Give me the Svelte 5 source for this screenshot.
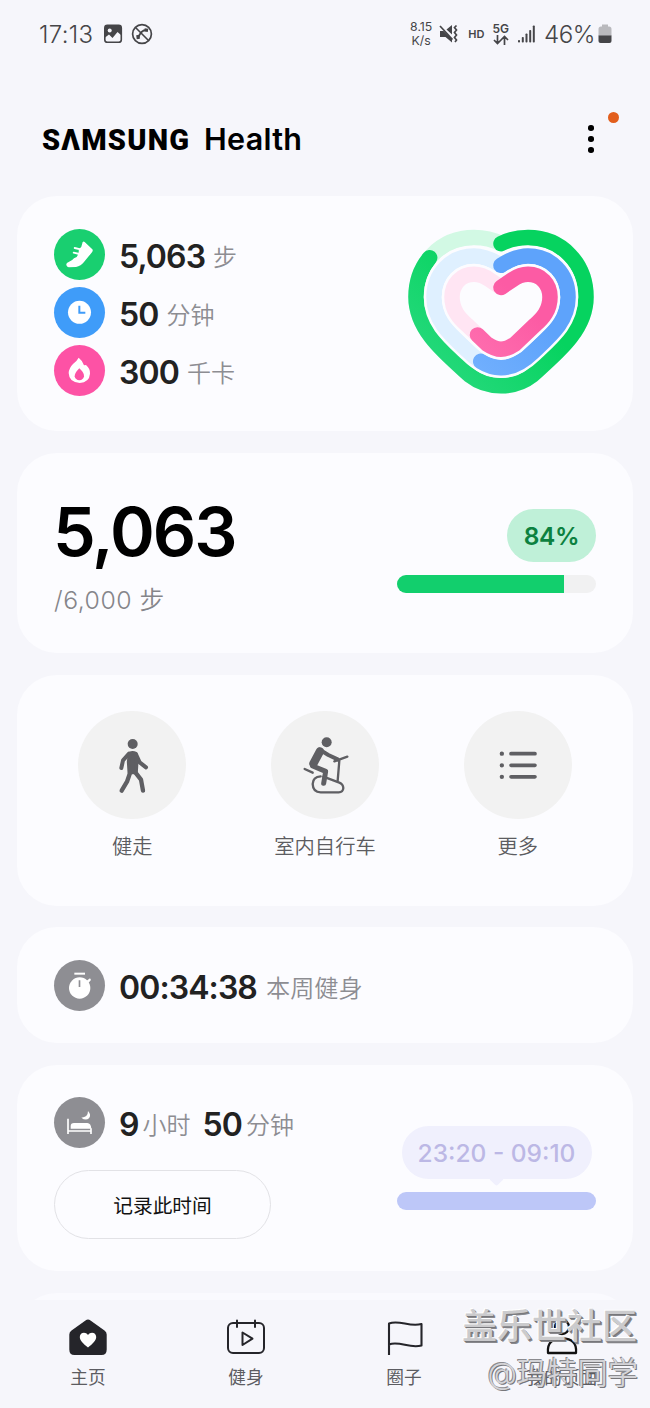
<script>
  const rings = [
    {
      name: "steps",
      track: "#d2f9e4",
      from: "#26d97c",
      to: "#06d35f",
      value: 84.5,
      d: "M501 243.7Q513 237.6 528 237.6C561 237.6 586 263 586 297C586 330 557 353 532 375.5Q519 385.8 501 385.8Q483 385.8 470 375.5C445 353 416 330 416 297C416 263 441 237.6 474 237.6Q489 237.6 501 243.7"
    },
    {
      name: "time",
      track: "#dff0ff",
      from: "#78b4ff",
      to: "#5ea3fb",
      value: 55.5,
      d: "M501 265.3Q516 256 528 256C551 256 568 274 568 297.3C568 321 551 335 533 352Q517 367.7 501 367.7Q485 367.7 469 352C451 335 434 321 434 297.3C434 274 451 256 474 256Q486 256 501 265.3"
    },
    {
      name: "energy",
      track: "#ffe5f3",
      from: "#ff79b5",
      to: "#fc5ba4",
      value: 60,
      d: "M501 287.5L512 280Q520 274.3 528 274.3C541 274.3 550 284 550 297C550 310 543 318 535 325L515 344Q507 349.3 501 349.3Q495 349.3 487 344L467 325C459 318 452 310 452 297C452 284 461 274.3 474 274.3Q482 274.3 490 280L501 287.5"
    }
  ];

  const goal = { steps: "5,063", target: "6,000", percent: 84 };
</script>

<div class="screen">
  <div class="status">
    <span class="clock">17:13</span>
    <svg class="s-image" width="20" height="20" viewBox="0 0 20 20">
      <rect x="1.8" y="1.3" width="16.5" height="17" rx="2.6" fill="none" stroke="#454548" stroke-width="1.6" />
      <path d="M2 2H18V11L14.5 8 9.5 14 6 10.5 2 13.5Z" fill="#454548" />
      <circle cx="6.7" cy="6.4" r="2" fill="#f6f6fb" />
    </svg>
    <svg class="s-call" width="22" height="22" viewBox="0 0 22 22" fill="none" stroke="#454548">
      <circle cx="11" cy="11" r="9.4" stroke-width="1.7" />
      <path d="M4.5 4.5 17.5 17.5" stroke-width="1.6" />
      <path d="M17 7Q10 6 7 15.5" stroke-width="1.8" />
      <path d="M13.5 6.8L17 7.3M6.8 12L7.3 16" stroke-width="3.2" />
    </svg>
    <span class="grow"></span>
    <span class="speed">8.15<br />K/s</span>
    <svg class="s-mute" width="20" height="20" viewBox="0 0 20 20">
      <path d="M1 7H4.5L13 15V18.5L6.5 13H1Z M7.5 5.5L13 1V10.5Z" fill="#454548" />
      <path d="M1 2L13.5 15.5" stroke="#454548" stroke-width="1.7" />
      <path d="M17.5 1.5l-2 2 2 2.5-2 2.5 2 2.5-2 2.5 2 2.5-1.5 2" fill="none" stroke="#454548" stroke-width="1.7" />
    </svg>
    <span class="hd">HD</span>
    <span class="net">
      5G
      <svg width="16" height="10" viewBox="0 0 16 10" fill="none" stroke="#454548" stroke-width="1.7">
        <path d="M4.5 0V8M1 5L4.5 8.5 8 5M11.5 10V2M8 5L11.5 1.5 15 5" />
      </svg>
    </span>
    <svg class="s-signal" width="19" height="18" viewBox="0 0 19 18" fill="#454548">
      <rect x="1" y="15" width="2" height="2.5" rx=".8" />
      <rect x="4.8" y="12" width="2" height="5.5" rx=".8" />
      <rect x="8.5" y="8.5" width="2" height="9" rx=".8" />
      <rect x="12.2" y="5" width="2" height="12.5" rx=".8" />
      <rect x="15.8" y="0.5" width="2" height="17" rx=".8" />
    </svg>
    <span class="power">46%</span>
    <svg class="s-battery" width="14" height="20" viewBox="0 0 14 20">
      <path d="M4 0.5H10V2.5H11Q13.5 2.5 13.5 5V12H.5V5Q.5 2.5 3 2.5H4Z" fill="#b9b9bd" />
      <path d="M.5 11.5H13.5V17Q13.5 19 11.5 19H2.5Q.5 19 .5 17Z" fill="#454548" />
    </svg>
  </div>

  <header>
    <h1><span class="brand" aria-label="SAMSUNG">SΛMSUNG</span><span class="product">Health</span></h1>
    <div class="menu">
      <i></i><i></i><i></i>
      <b class="badge"></b>
    </div>
  </header>

  <main>
    <section class="card summary">
      <div class="stats">
        <div class="stat">
          <svg class="disc green" viewBox="0 0 153 153" fill="#fff">
            <path d="M37 108Q36 102 44 99Q55 95 60 88L68 84Q76 72 74 62L82 53 86 39Q89 36 92 39L115 61Q118 65 114 70L104 82L90 99Q81 111 66 114L44 115Q38 114 37 108Z" />
            <path d="M62 57L80 61M59 71L76 75" stroke="#fff" stroke-width="5.5" stroke-linecap="round" />
          </svg>
          <strong>5,063</strong><span>步</span>
        </div>
        <div class="stat">
          <svg class="disc blue" viewBox="0 0 153 153">
            <circle cx="76.5" cy="76" r="34.5" fill="#fff" />
            <path d="M76 56V77H94" fill="none" stroke="#3f9cf9" stroke-width="6" />
          </svg>
          <strong>50</strong><span>分钟</span>
        </div>
        <div class="stat">
          <svg class="disc pink" viewBox="0 0 153 153">
            <path d="M74 38Q84 45 90 61L96 60Q109 71 108 86Q106 112 77 114Q45 112 44 84Q45 69 57 57Q68 49 74 38Z" fill="#fff" />
            <path d="M76 70Q91 84 90 94Q88 105 76 106Q64 105 62 94Q62 84 76 70Z" fill="#fd52a5" />
          </svg>
          <strong>300</strong><span>千卡</span>
        </div>
      </div>

      <svg class="heart" width="190" height="168" viewBox="406 228 190 168" fill="none">
        <defs>
          {#each rings as ring}
            <linearGradient id={ring.name} gradientUnits="userSpaceOnUse" x1="440" y1="380" x2="520" y2="300">
              <stop offset="0" stop-color={ring.from} />
              <stop offset="1" stop-color={ring.to} />
            </linearGradient>
          {/each}
        </defs>
        {#each rings as ring, i}
          {#if i > 0}
            <path d={ring.d} stroke="#fcfcff" stroke-width="20.5" />
          {/if}
          <path d={ring.d} stroke={ring.track} stroke-width="15.5" />
          <path
            d={ring.d}
            pathLength="100"
            stroke="url(#{ring.name})"
            stroke-width="15.5"
            stroke-linecap="round"
            stroke-dasharray="{ring.value} 200"
          />
        {/each}
      </svg>
    </section>

    <section class="card goal">
      <div>
        <div class="count">{goal.steps}</div>
        <div class="target">/{goal.target} 步</div>
      </div>
      <div class="progress">
        <span class="percent">{goal.percent}%</span>
        <div class="bar"><div class="fill" style="width: {goal.percent}%"></div></div>
      </div>
    </section>

    <section class="card workouts">
      <div class="workout">
        <svg viewBox="0 0 324 324" fill="none" stroke="#5f5f63" stroke-linecap="round" stroke-linejoin="round">
          <circle cx="164" cy="99" r="15" fill="#5f5f63" stroke="none" />
          <path d="M153 128L135 148 130 171" stroke-width="12" />
          <path d="M174 130L185 154 204 169" stroke-width="12" />
          <path d="M155 128Q164 123 173 128L176 152 174 184 154 184 152 152Z" fill="#5f5f63" stroke-width="11" />
          <path d="M156 186L147 212 131 239" stroke-width="13" />
          <path d="M172 184L189 206 195 239" stroke-width="13" />
        </svg>
        <span>健走</span>
      </div>
      <div class="workout">
        <svg viewBox="0 0 324 324" fill="none" stroke="#5f5f63" stroke-linecap="round" stroke-linejoin="round">
          <circle cx="167" cy="94" r="15" fill="#5f5f63" stroke="none" />
          <path d="M147 121L127 158" stroke-width="25" />
          <path d="M146 116L172 132 200 145" stroke-width="12" />
          <path d="M125 165L164 181 158 217" stroke-width="15" />
          <path d="M190 151L229 137M205 149L200 209M101 174L125 185" stroke-width="7" />
          <path d="M149 196Q126 197 125 219Q126 244 149 244H203Q216 244 217 231Q216 219 205 215L157 197" stroke-width="7" />
        </svg>
        <span>室内自行车</span>
      </div>
      <div class="workout">
        <svg viewBox="0 0 324 324" fill="none" stroke="#5f5f63" stroke-linecap="round">
          <path d="M141 128H213M141 163H213M141 197.5H213" stroke-width="11" />
          <path d="M113.5 128h.1M113.5 163h.1M113.5 197.5h.1" stroke-width="13" />
        </svg>
        <span>更多</span>
      </div>
    </section>

    <section class="card week">
      <div class="stat">
        <svg class="disc gray" viewBox="0 0 153 153" fill="#fff">
          <circle cx="77" cy="84" r="32" />
          <rect x="61" y="38" width="32" height="6" />
          <path d="M98 62L108 55 111 60 103 69Z" />
          <path d="M76.5 61V81" stroke="#8e8e93" stroke-width="5" />
        </svg>
        <strong>00:34:38</strong><span class="near">本周健身</span>
      </div>
    </section>

    <section class="card sleep">
      <div>
        <div class="stat">
          <svg class="disc gray" viewBox="0 0 153 153" fill="none" stroke="#fff">
            <path d="M42 65V111M42 102H111M111 94V111" stroke-width="5" />
            <path d="M50 95V88Q50 78 60 78H100Q111 79 112 95Z" fill="#fff" stroke="none" />
            <path d="M102 42Q113 54 105 64Q95 72 82 62Q102 61 102 42Z" fill="#fff" stroke="none" />
          </svg>
          <strong>9</strong><span class="tight">小时</span>
          <strong class="next">50</strong><span class="tight">分钟</span>
        </div>
        <button>记录此时间</button>
      </div>
      <div class="night">
        <span class="range">23:20 - 09:10</span>
        <div class="bar"></div>
      </div>
    </section>

    <section class="card peek"></section>
  </main>

  <nav>
    <div class="tab">
      <svg width="40" height="40" viewBox="0 0 40 40">
        <path d="M17.5 2.5Q20 .5 22.5 2.5L36.5 12.5Q38.7 14 38.7 16.5V31.5Q38.7 37 33.5 37H6.5Q1.3 37 1.3 31.5V16.5Q1.3 14 3.5 12.5Z" fill="#25252a" />
        <path d="M20 29.5C15 25.5 11.8 22.5 11.8 19C11.8 14.5 17.5 13.3 20 17C22.5 13.3 28.2 14.5 28.2 19C28.2 22.5 25 25.5 20 29.5Z" fill="#fff" />
      </svg>
      <span>主页</span>
    </div>
    <div class="tab">
      <svg width="40" height="40" viewBox="0 0 40 40" fill="none" stroke="#25252a" stroke-width="2" stroke-linejoin="round" stroke-linecap="round">
        <rect x="2" y="5" width="36" height="30" rx="5" />
        <path d="M11 2.5V9M29 2.5V9M16.5 14.5V27L26.5 20.7Z" />
      </svg>
      <span>健身</span>
    </div>
    <div class="tab">
      <svg width="40" height="40" viewBox="0 0 40 40" fill="none" stroke="#25252a" stroke-width="2.1" stroke-linejoin="round">
        <path d="M5 37V5.5C15.5 1.5 25.5 9.5 37.5 6V27.5C25.5 31 15.5 22.5 5 26.5" />
      </svg>
      <span>圈子</span>
    </div>
    <div class="tab">
      <svg width="40" height="40" viewBox="0 0 40 40" fill="none" stroke="#111" stroke-width="2.3" stroke-linejoin="round">
        <circle cx="20" cy="9" r="7" />
        <path d="M6 35Q4.5 20.5 20 20.5T34 35Z" />
      </svg>
      <span>我的页面</span>
    </div>
  </nav>

  <div class="watermark">
    <div class="community">盖乐世社区</div>
    <div class="author">@玛特同学</div>
  </div>
</div>

<style>
  :global(body) {
    background: #f6f6fb;
  }
  .screen {
    position: relative;
    width: 650px;
    height: 1408px;
    overflow: hidden;
    display: flex;
    flex-direction: column;
    background: #f6f6fb;
    font-family: Inter, "Noto Sans CJK SC", sans-serif;
    color: #222;
  }

  .status {
    display: flex;
    align-items: center;
    height: 68px;
    padding: 0 38px 0 39px;
    box-sizing: border-box;
    color: #454548;
  }
  .clock {
    width: 54px;
    font-size: 24px;
    font-weight: 350;
    letter-spacing: 0.3px;
  }
  .s-image {
    margin-left: 10px;
  }
  .s-call {
    margin-left: 8px;
  }
  .grow {
    flex: 1;
  }
  .speed {
    font-size: 12.3px;
    line-height: 14px;
    text-align: center;
  }
  .s-mute {
    margin-left: 7px;
  }
  .hd {
    margin-left: 9px;
    font-size: 11px;
    font-weight: 600;
  }
  .net {
    display: flex;
    flex-direction: column;
    align-items: center;
    margin-left: 8px;
    font-size: 12px;
    line-height: 12px;
    font-weight: 600;
  }
  .s-signal {
    margin-left: 8px;
  }
  .power {
    margin-left: 8px;
    font-size: 24.2px;
    font-weight: 350;
    letter-spacing: -0.5px;
  }
  .s-battery {
    margin-left: 3px;
  }

  header {
    display: flex;
    justify-content: space-between;
    height: 128px;
    padding: 0 56px 0 42px;
  }
  h1 {
    display: flex;
    align-items: baseline;
    margin: 0;
    padding-top: 52px;
    height: 37px;
    line-height: 37px;
    color: #000;
  }
  .brand {
    width: 162px;
    font-family: Roboto, sans-serif;
    font-size: 29px;
    font-weight: 900;
    letter-spacing: 1.2px;
  }
  .product {
    font-size: 30.5px;
    font-weight: 600;
    letter-spacing: 0.3px;
  }
  .menu {
    position: relative;
    display: flex;
    flex-direction: column;
    gap: 5.6px;
    padding-top: 57px;
  }
  .menu i {
    width: 5.6px;
    height: 5.6px;
    border-radius: 50%;
    background: #000;
  }
  .badge {
    position: absolute;
    left: 20px;
    top: 44px;
    width: 11px;
    height: 11px;
    border-radius: 50%;
    background: #e25e1c;
  }

  main {
    display: flex;
    flex-direction: column;
    flex: 1;
    min-height: 0;
    overflow: hidden;
    padding: 0 17px;
    gap: 22px;
  }
  .card {
    flex: none;
    box-sizing: border-box;
    border-radius: 40px;
    background: #fcfcff;
    padding: 0 37px;
  }
  .summary {
    display: flex;
    justify-content: space-between;
    height: 235px;
    padding-top: 33px;
  }
  .stats {
    display: flex;
    flex-direction: column;
    gap: 7px;
  }
  .heart {
    margin-top: -1px;
  }
  .stat {
    display: flex;
    align-items: center;
    height: 51px;
    line-height: 51px;
  }
  .stat strong {
    margin: 3px 0 0 14px;
    font-size: 32px;
    font-weight: 600;
    letter-spacing: -0.9px;
  }
  .stat span {
    margin: 6px 0 0 8px;
    font-size: 24px;
    font-weight: 350;
    color: #8d8d92;
  }
  .stat .near {
    margin-left: 9px;
    font-size: 24.2px;
  }
  .stat .tight {
    margin-left: 4px;
  }
  .stat .next {
    margin-left: 12px;
  }
  .disc {
    width: 51px;
    height: 51px;
    border-radius: 50%;
  }
  .green {
    background: #19cf70;
  }
  .blue {
    background: #3f9cf9;
  }
  .pink {
    background: #fd52a5;
  }
  .gray {
    background: #8e8e93;
  }

  .goal {
    display: flex;
    justify-content: space-between;
    height: 200px;
  }
  .count {
    margin: 37px 0 0 -1px;
    height: 83px;
    line-height: 82px;
    font-size: 68px;
    font-weight: 600;
    letter-spacing: -2px;
    color: #000;
  }
  .target {
    height: 52px;
    line-height: 54px;
    font-size: 24.8px;
    font-weight: 350;
    letter-spacing: 0.5px;
    color: #85858a;
  }
  .progress {
    display: flex;
    flex-direction: column;
    align-items: flex-end;
    padding-top: 56px;
  }
  .percent {
    width: 89px;
    height: 53px;
    margin-bottom: 13px;
    border-radius: 27px;
    background: #bff0d8;
    color: #0c8140;
    font-size: 24.5px;
    font-weight: 600;
    letter-spacing: -0.4px;
    line-height: 55px;
    text-align: center;
  }
  .bar {
    width: 199px;
    height: 18px;
    border-radius: 9px;
    overflow: hidden;
    background: #f1f1f2;
  }
  .fill {
    height: 100%;
    background: #12cf6d;
  }

  .workouts {
    display: flex;
    height: 231px;
    padding: 36px 19px 0;
  }
  .workout {
    display: flex;
    flex: 1;
    flex-direction: column;
    align-items: center;
  }
  .workout svg {
    width: 108px;
    height: 108px;
    border-radius: 50%;
    background: #f2f2f2;
  }
  .workout span {
    margin-top: 13px;
    font-size: 20.3px;
    line-height: 30px;
    color: #5c5c61;
    font-weight: 350;
  }

  .week {
    height: 116px;
    margin-top: -1px;
    padding-top: 33px;
  }
  .sleep {
    display: flex;
    justify-content: space-between;
    height: 206px;
    padding-top: 32px;
  }
  button {
    display: block;
    width: 217px;
    height: 69px;
    margin-top: 22px;
    padding: 0;
    border: 1px solid #e2e2e6;
    border-radius: 35px;
    background: none;
    font: 400 19.7px/67px "Noto Sans CJK SC", sans-serif;
    color: #111;
  }
  .night {
    display: flex;
    flex-direction: column;
    align-items: center;
    padding-top: 29px;
  }
  .range {
    position: relative;
    width: 190px;
    height: 53px;
    margin-bottom: 13px;
    border-radius: 27px;
    background: #f0f0fd;
    color: #bcb8e5;
    font-size: 24.5px;
    font-weight: 500;
    line-height: 54px;
    text-align: center;
    white-space: nowrap;
  }
  .range::after {
    content: "";
    position: absolute;
    left: 89px;
    bottom: -5px;
    width: 11px;
    height: 11px;
    border-radius: 2px;
    background: #f0f0fd;
    transform: rotate(45deg);
  }
  .night .bar {
    background: #bdc7f8;
  }
  .peek {
    height: 80px;
    background: #fafafe;
  }

  nav {
    display: flex;
    flex: none;
    height: 108px;
    padding: 0 9px;
  }
  .tab {
    display: flex;
    flex: 1;
    flex-direction: column;
    align-items: center;
    padding-top: 18px;
  }
  .tab span {
    margin-top: 7px;
    font-size: 17.7px;
    line-height: 26px;
    color: #5c5c61;
  }

  .watermark {
    position: absolute;
    right: 12px;
    bottom: 12px;
    text-align: right;
    white-space: nowrap;
  }
  .community {
    padding-right: 1px;
    font-size: 35px;
    line-height: 48px;
    font-weight: 500;
    color: #cbcbcd;
    text-shadow: -1px -1px 0 #fff, 1px 1px 0 #77777b, 2px 2px 0 #88888c;
  }
  .author {
    font-size: 30.3px;
    line-height: 46px;
    font-weight: 350;
    color: #d4d4d8;
    text-shadow: -1px -1px 0 #8b8b8f, 1px 1px 0 #77777b;
  }
</style>
